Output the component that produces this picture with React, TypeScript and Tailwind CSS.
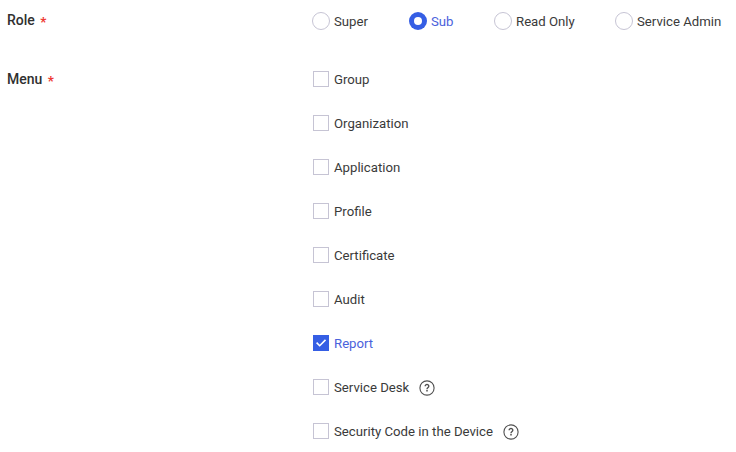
const roles = [
  { label: 'Super', w: 'w-[97px]' },
  { label: 'Sub', w: 'w-[85px]', on: true },
  { label: 'Read Only', w: 'w-[121px]' },
  { label: 'Service Admin', w: 'w-[112px]' },
];

const menus = [
  { label: 'Group' },
  { label: 'Organization' },
  { label: 'Application' },
  { label: 'Profile' },
  { label: 'Certificate' },
  { label: 'Audit' },
  { label: 'Report', on: true },
  { label: 'Service Desk', help: true },
  { label: 'Security Code in the Device', help: true },
];

function Radio({ on }: { on?: boolean }) {
  return (
    <svg width="18" height="18" viewBox="0 0 18 18" className="shrink-0">
      {on ? (
        <>
          <circle cx="9" cy="9" r="9" fill="#355ee4" />
          <circle cx="9" cy="9" r="4" fill="#fff" />
        </>
      ) : (
        <circle cx="9" cy="9" r="8.5" fill="#fff" stroke="#c6c4d4" />
      )}
    </svg>
  );
}

function Checkbox({ on }: { on?: boolean }) {
  return (
    <svg width="16" height="16" viewBox="0 0 16 16" className="shrink-0">
      {on ? (
        <>
          <rect width="16" height="16" fill="#355ee4" />
          <path d="M3.6 7.6 6.7 10.7l5.8-5.8" fill="none" stroke="#fff" strokeWidth="1.6" />
        </>
      ) : (
        <rect x=".5" y=".5" width="15" height="15" fill="#fff" stroke="#c6c4d4" />
      )}
    </svg>
  );
}

function Help() {
  return (
    <svg width="16" height="16" viewBox="0 0 16 16" className="mt-px shrink-0" fill="none" stroke="#505050">
      <circle cx="8" cy="8" r="7.1" strokeWidth="1.1" />
      <path d="M6.2 6.3a1.8 1.7 0 1 1 2.9 1.2C8.3 8.1 8 8.4 8 9.2" strokeWidth="1.4" />
      <path d="M8 10.1v1.4" strokeWidth="1.5" />
    </svg>
  );
}

function Label({ text }: { text: string }) {
  return (
    <div className="flex h-5 w-[305px] shrink-0 items-center text-[14px] font-medium text-[#303030]">
      {text}
      <span className="ml-[5.5px] pt-[3px] text-[13px] font-black text-[#ee3b35]">*</span>
    </div>
  );
}

export default function App() {
  return (
    <main className="h-[452px] w-[736px] overflow-hidden bg-white pl-[7px] pt-[10px] font-['Roboto',sans-serif] text-[13.2px] text-[#3a3a3a]">
      <div className="flex">
        <Label text="Role" />
        <div className="flex h-[22px] items-center">
          {roles.map((r) => (
            <div key={r.label} className={`flex shrink-0 items-center gap-1 ${r.w}`}>
              <Radio on={r.on} />
              <span className={`whitespace-nowrap pt-px ${r.on ? 'text-[#4a62dc]' : ''}`}>{r.label}</span>
            </div>
          ))}
        </div>
      </div>
      <div className="mt-[37px] flex">
        <Label text="Menu" />
        <div className="ml-px flex flex-col gap-6">
          {menus.map((m) => (
            <div key={m.label} className="flex h-5 items-center">
              <Checkbox on={m.on} />
              <span className={`ml-[5px] mr-[10px] whitespace-nowrap pt-[2px] ${m.on ? 'text-[#4a62dc]' : ''}`}>{m.label}</span>
              {m.help && <Help />}
            </div>
          ))}
        </div>
      </div>
    </main>
  );
}
